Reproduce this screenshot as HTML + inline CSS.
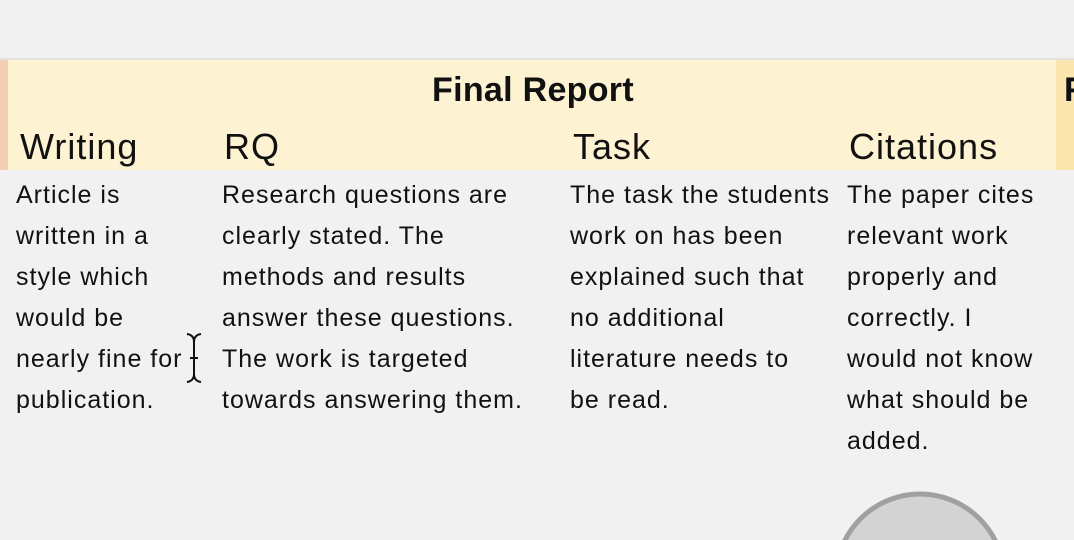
<!DOCTYPE html>
<html><head><meta charset="utf-8"><style>
html,body{margin:0;width:1074px;height:540px;overflow:hidden}
body{background:#f2f1f1;font-family:"Liberation Sans",sans-serif;color:#111}
#w{position:relative;width:1074px;height:540px;overflow:hidden}
.band{position:absolute;left:0;top:60px;width:1056px;height:110px;background:#fdf2d2}
.strip{position:absolute;left:0;top:60px;width:8px;height:110px;background:#f3cfb3}
.band2{position:absolute;left:1056px;top:60px;width:18px;height:110px;background:#fbe6b0}
.t{position:absolute;white-space:nowrap}
.h{font-size:36px;top:126px;letter-spacing:1px}
.b{font-size:25px;line-height:41px;top:175px;letter-spacing:1px}
</style></head><body><div id="w">
<div style="position:absolute;left:0;top:58px;width:1074px;height:2px;background:#e4e2df"></div>
<div class="band"></div><div class="strip"></div><div class="band2"></div>
<div class="t" style="left:432px;top:71px;font-size:34px;font-weight:bold;letter-spacing:0.3px">Final Report</div>
<div class="t" style="left:1064px;top:71px;font-size:34px;font-weight:bold">F</div>
<div class="t h" style="left:20px">Writing</div>
<div class="t h" style="left:224px">RQ</div>
<div class="t h" style="left:573px">Task</div>
<div class="t h" style="left:849px">Citations</div>
<div class="t b" style="left:16px">Article is<br>written in a<br>style which<br>would be<br>nearly fine for<br>publication.</div>
<div class="t b" style="left:222px">Research questions are<br>clearly stated. The<br>methods and results<br>answer these questions.<br>The work is targeted<br>towards answering them.</div>
<div class="t b" style="left:570px">The task the students<br>work on has been<br>explained such that<br>no additional<br>literature needs to<br>be read.</div>
<div class="t b" style="left:847px">The paper cites<br>relevant work<br>properly and<br>correctly. I<br>would not know<br>what should be<br>added.</div>
<svg style="position:absolute;left:184px;top:332px" width="20" height="52"><path d="M3 2 Q10 3 10 10 V42 Q10 49 3 50 M17 2 Q10 3 10 10 M10 42 Q10 49 17 50 M6 26 H14" stroke="#111" stroke-width="2" fill="none"/></svg>
<svg style="position:absolute;left:830px;top:490px" width="180" height="50"><circle cx="90" cy="88" r="84" fill="#d3d3d3" stroke="#a0a0a0" stroke-width="5"/></svg>
</div></body></html>
